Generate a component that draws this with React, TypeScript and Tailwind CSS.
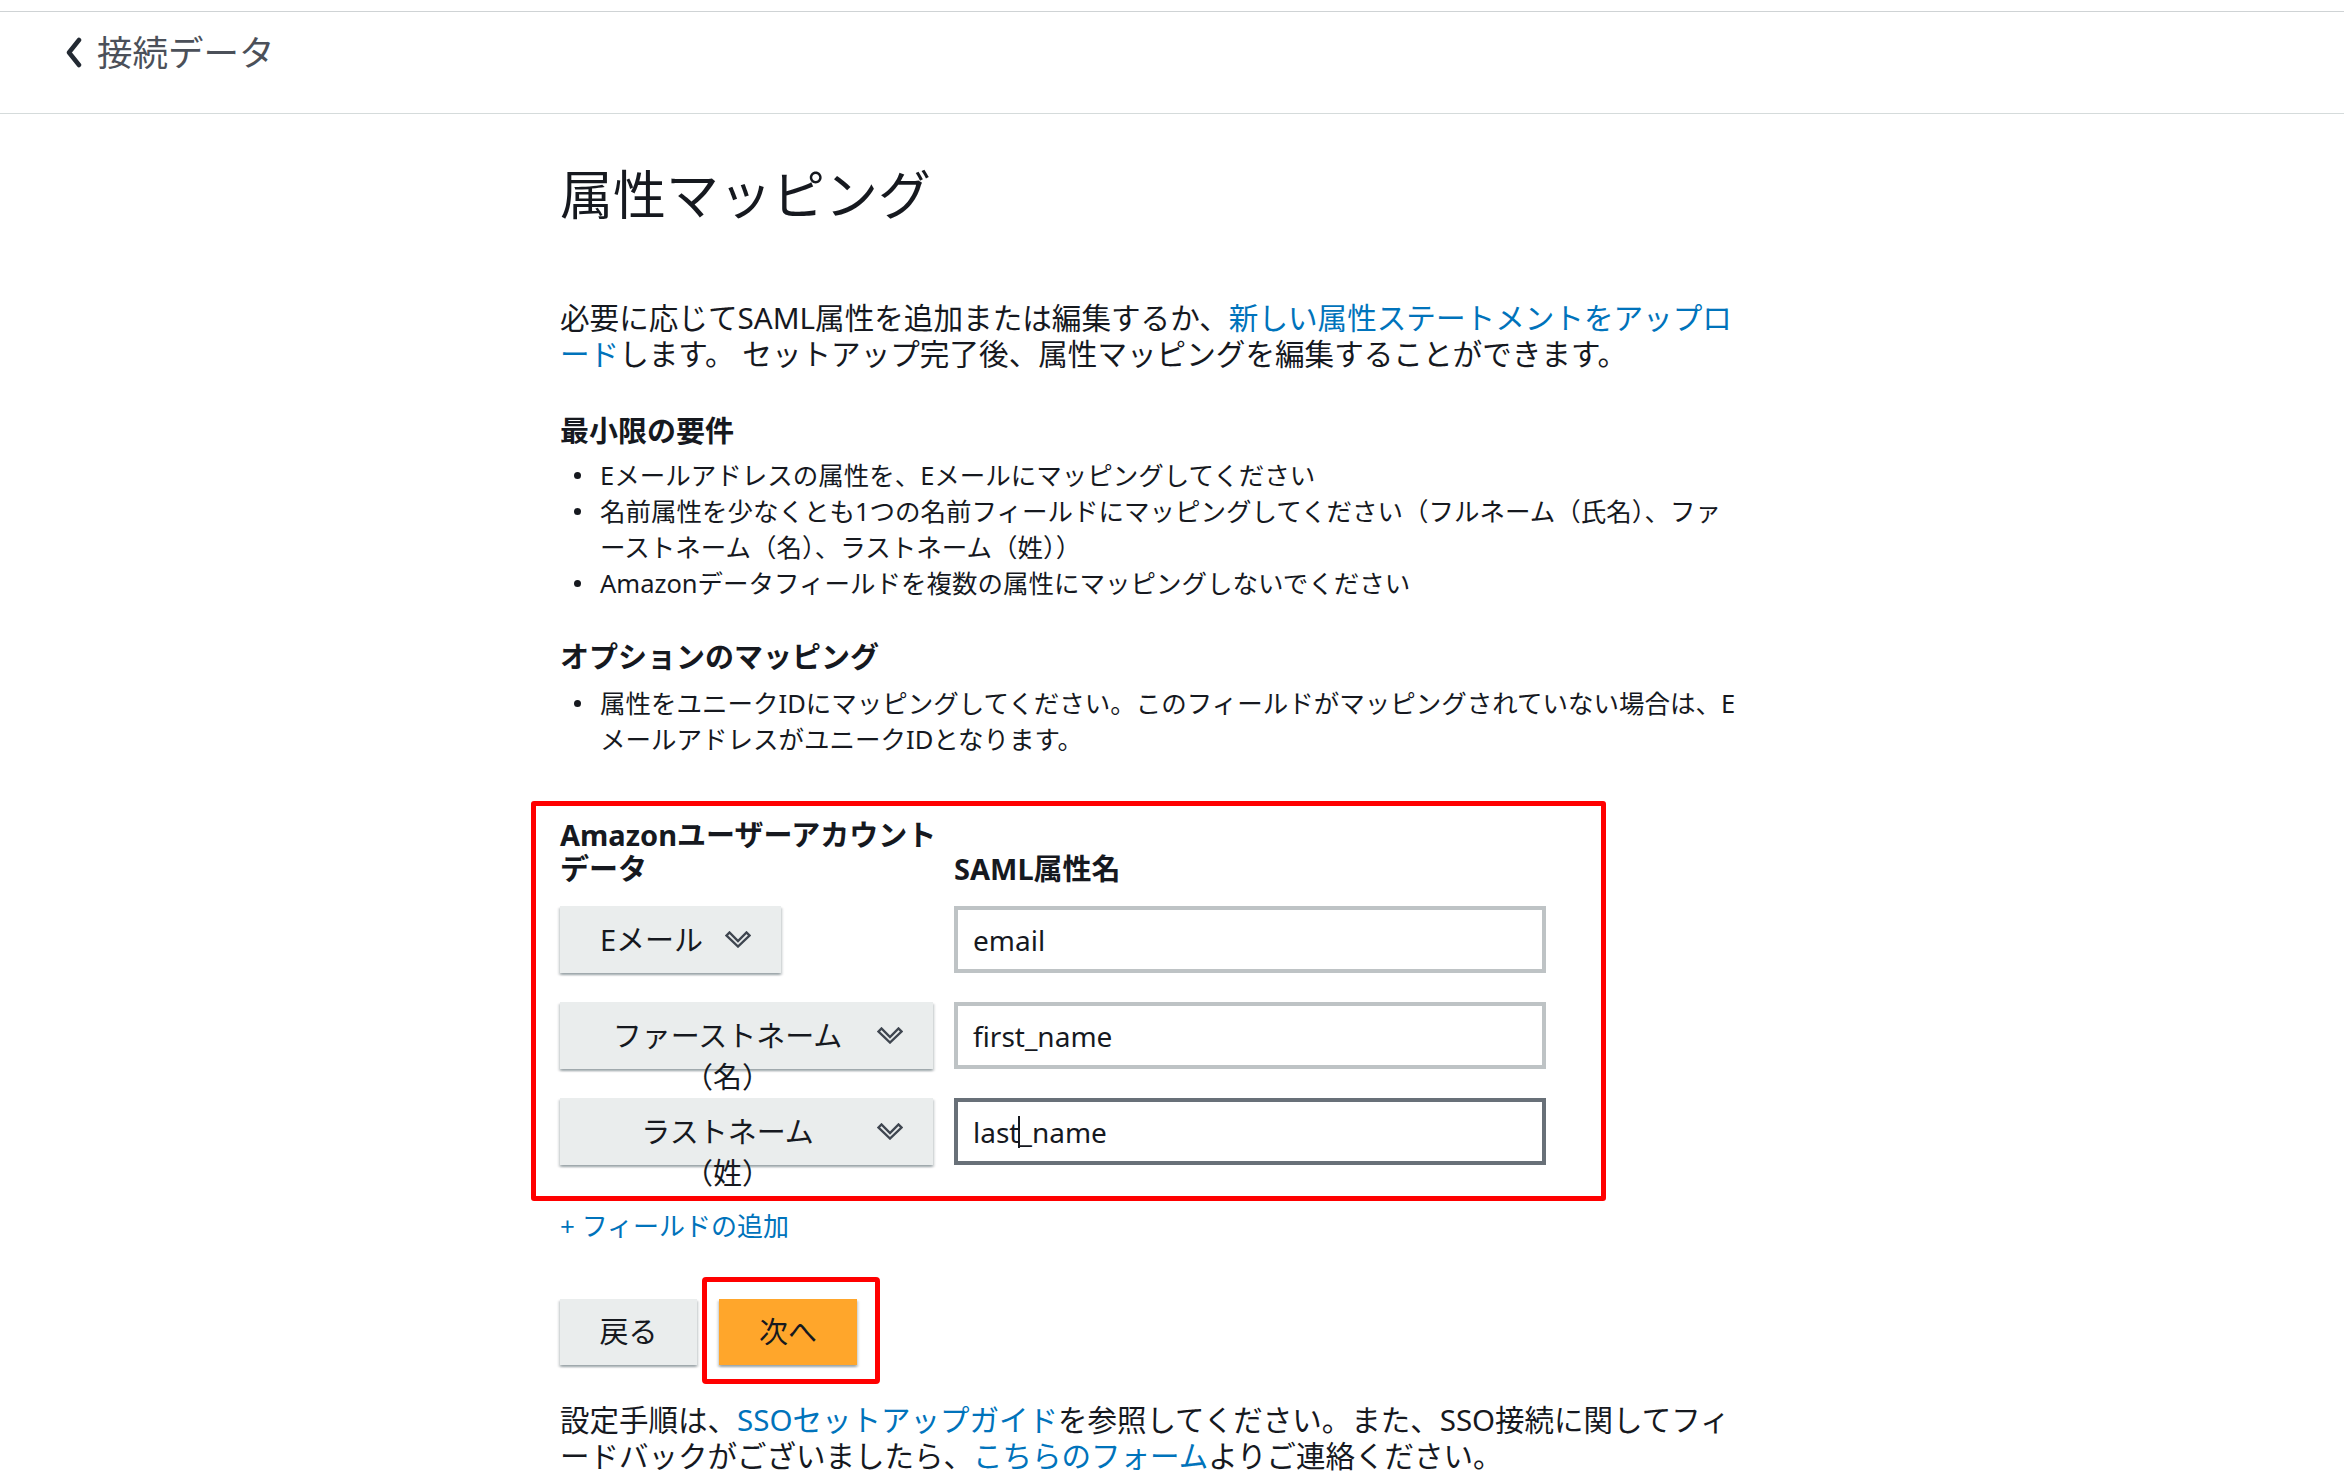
import React from "react";

const font = "font-['Noto_Sans','Noto_Sans_CJK_JP',sans-serif]";

const btnShadow =
  "shadow-[0_2px_2px_0_rgba(0,28,36,0.25),2px_2px_2px_0_rgba(0,28,36,0.1),-2px_2px_2px_0_rgba(0,28,36,0.1)]";

const ChevronDown = () => (
  <svg viewBox="0 0 26 17" className="w-[26px] h-[17px] shrink-0">
    <path
      d="M1.5 4.5 L4.5 1.5 L13 10 L21.5 1.5 L24.5 4.5 L13 15.5 Z"
      fill="none"
      stroke="#3f4650"
      strokeWidth="2.4"
      strokeLinejoin="miter"
    />
  </svg>
);

const Select = ({ label, wide }: { label: string; wide?: boolean }) => (
  <button
    type="button"
    className={`flex items-center h-[67px] pl-5 pr-[30px] bg-[#eaeded] text-[29px] leading-[41px] text-[#16191f] ${btnShadow} ${
      wide ? "w-[373px]" : "w-fit"
    }`}
  >
    <span className={`flex-1 self-start pt-[13px] text-center ${wide ? "px-[27px]" : "px-5"}`}>{label}</span>
    <span className="ml-[2px] flex">
      <ChevronDown />
    </span>
  </button>
);

const Field = ({ children, focused }: { children: React.ReactNode; focused?: boolean }) => (
  <div
    className={`flex items-center h-[67px] w-[592px] border-[4px] bg-white pl-[15px] text-[28px] text-[#16191f] ${
      focused ? "border-[#687078]" : "border-[#bec3c5]"
    }`}
  >
    {children}
  </div>
);

const Bullet = ({ children }: { children: React.ReactNode }) => (
  <li className="flex">
    <span className="w-[40px] h-[36px] shrink-0 flex items-center pl-[14px]">
      <span className="w-[7px] h-[7px] rounded-full bg-[#16191f]" />
    </span>
    <span>{children}</span>
  </li>
);

const rows = [
  { label: "Eメール", value: "email" },
  { label: "ファーストネーム（名）", value: "first_name", wide: true },
  { label: "ラストネーム（姓）", value: "last_name", wide: true, focused: true },
];

export default function App() {
  return (
    <div lang="ja" className={`min-h-screen bg-white text-[#16191f] ${font}`}>
      <div className="h-[12px] border-b border-[#cfd3d5]" />

      {/* Back link */}
      <header className="h-[102px] border-b border-[#d5dbdb] pl-[65px] pt-[19px]">
        <a href="#" className="flex items-center gap-[15px] text-[35.5px] leading-[42px] text-[#4b5059] w-fit">
          <svg viewBox="0 0 17 31" className="w-[17px] h-[31px]">
            <polyline
              points="14,3 4,15.5 14,28"
              fill="none"
              stroke="#232a33"
              strokeWidth="4.5"
              strokeLinecap="round"
              strokeLinejoin="round"
            />
          </svg>
          接続データ
        </a>
      </header>

      <main className="pl-[560px] pt-[50px]">
        <h1 className="text-[53px] leading-[62px] font-normal">属性マッピング</h1>

        <p className="mt-[74px] w-[1200px] text-[29.6px] leading-[36px]">
          必要に応じてSAML属性を追加または編集するか、
          <a href="#" className="text-[#0073bb]">
            新しい属性ステートメントをアップロ
            <br />
            ード
          </a>
          します。 セットアップ完了後、属性マッピングを編集することができます。
        </p>

        <h2 className="mt-[41px] text-[29px] leading-[36px] font-bold">最小限の要件</h2>
        <ul className="mt-[8px] text-[25.5px] leading-[36px]">
          <Bullet>Eメールアドレスの属性を、Eメールにマッピングしてください</Bullet>
          <Bullet>
            名前属性を少なくとも1つの名前フィールドにマッピングしてください（フルネーム（氏名）、ファ
            <br />
            ーストネーム（名）、ラストネーム（姓））
          </Bullet>
          <Bullet>Amazonデータフィールドを複数の属性にマッピングしないでください</Bullet>
        </ul>

        <h2 className="mt-[38px] text-[29px] leading-[36px] font-bold">オプションのマッピング</h2>
        <ul className="mt-[10px] text-[25.5px] leading-[36px]">
          <Bullet>
            属性をユニークIDにマッピングしてください。このフィールドがマッピングされていない場合は、E
            <br />
            メールアドレスがユニークIDとなります。
          </Bullet>
        </ul>

        {/* Mapping table (highlighted) */}
        <div className="mt-[44px] -ml-[29px] w-[1075px] border-[5px] border-[#ff0000] rounded-[3px] pt-[12px] pl-[24px] pb-[31px]">
          <div className="grid grid-cols-[394px_592px] items-end text-[29px] leading-[34px] font-bold">
            <div>Amazonユーザーアカウントデータ</div>
            <div>SAML属性名</div>
          </div>
          <div className="mt-[20px] flex flex-col gap-[29px]">
            {rows.map((r) => (
              <div key={r.value} className="grid grid-cols-[394px_592px]">
                <Select label={r.label} wide={r.wide} />
                <Field focused={r.focused}>
                  {r.focused ? (
                    <>
                      last
                      <span className="inline-block w-[2px] h-[32px] bg-[#16191f] -mx-[1px]" />
                      _name
                    </>
                  ) : (
                    r.value
                  )}
                </Field>
              </div>
            ))}
          </div>
        </div>

        <a href="#" className="block mt-[8px] w-fit text-[26px] leading-[34px] text-[#0073bb]">
          + フィールドの追加
        </a>

        <div className="mt-[56px] flex gap-[22px]">
          <button type="button" className={`w-[137px] h-[66px] bg-[#eaeded] text-[29px] text-[#16191f] ${btnShadow}`}>
            戻る
          </button>
          <div className="relative">
            <button type="button" className={`w-[138px] h-[66px] bg-[#ffa62b] text-[29px] text-[#16191f] ${btnShadow}`}>
              次へ
            </button>
            <div className="absolute -left-[17px] -top-[22px] -right-[23px] -bottom-[19px] border-[5px] border-[#ff0000] rounded-[4px] pointer-events-none" />
          </div>
        </div>

        <p className="mt-[37px] w-[1200px] text-[29.5px] leading-[36px]">
          設定手順は、
          <a href="#" className="text-[#0073bb]">SSOセットアップガイド</a>
          を参照してください。また、SSO接続に関してフィ
          <br />
          ードバックがございましたら、
          <a href="#" className="text-[#0073bb]">こちらのフォーム</a>
          よりご連絡ください。
        </p>
      </main>
    </div>
  );
}
